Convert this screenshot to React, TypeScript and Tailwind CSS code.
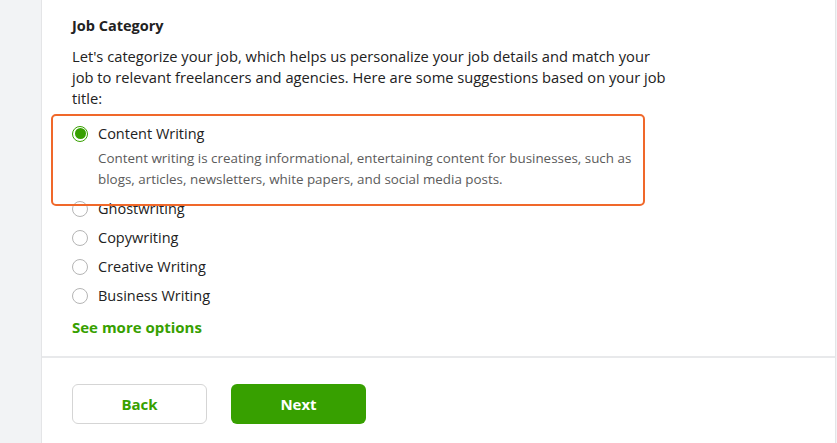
import React from "react";

const options = ["Ghostwriting", "Copywriting", "Creative Writing", "Business Writing"];

function Radio({ checked }: { checked?: boolean }) {
    if (checked) {
        return (
            <span className="flex h-[16px] w-[16px] shrink-0 items-center justify-center rounded-full border border-[#37a000] bg-white">
                <span className="h-[11px] w-[11px] rounded-full bg-[#37a000]" />
            </span>
        );
    }
    return <span className="h-[16px] w-[16px] shrink-0 rounded-full border border-[#b5b5b5] bg-white" />;
}

export default function App() {
    return (
        <div
            className="flex h-[443px] w-[837px] overflow-hidden bg-[#f2f3f5] text-[#222]"
            style={{ fontFamily: "'Open Sans', Lato, sans-serif" }}
        >
            <div className="w-[41px] shrink-0" />
            <div className="flex w-[795px] flex-col border-x border-[#e4e5e7] bg-white">
                {/* Job category section */}
                <div className="relative px-[30px] pt-[16px] pb-[18px]">
                    <h2 className="text-[14.5px] leading-[20px] font-bold">Job Category</h2>
                    <p className="mt-[10px] max-w-[600px] text-[14.7px] leading-[21px]">
                        Let's categorize your job, which helps us personalize your job details and match your
                        <br />
                        job to relevant freelancers and agencies. Here are some suggestions based on your job
                        <br />
                        title:
                    </p>

                    <div className="mt-[14px] flex flex-col">
                        <div className="flex items-center gap-[10px]">
                            <Radio checked />
                            <span className="text-[14.5px] leading-[21px]">Content Writing</span>
                        </div>
                        <p className="mt-[4px] pl-[26px] text-[13.4px] leading-[21px] text-[#5b5b5b]">
                            Content writing is creating informational, entertaining content for businesses, such as
                            <br />
                            blogs, articles, newsletters, white papers, and social media posts.
                        </p>
                        <div className="mt-[8px] flex flex-col gap-[8px]">
                            {options.map((o) => (
                                <div key={o} className="flex items-center gap-[10px]">
                                    <Radio />
                                    <span className="text-[14.5px] leading-[21px]">{o}</span>
                                </div>
                            ))}
                        </div>
                    </div>

                    <a className="mt-[11px] block text-[15px] leading-[21px] font-bold text-[#37a000]">
                        See more options
                    </a>

                    {/* highlight annotation */}
                    <div className="pointer-events-none absolute top-[114px] left-[9px] h-[92px] w-[594px] rounded-[5px] border-2 border-[#f0682a]" />
                </div>

                {/* Footer */}
                <div className="flex gap-[24px] border-t-2 border-[#e8e9eb] px-[30px] pt-[26px]">
                    <button className="h-[40px] w-[135px] rounded-[6px] border border-[#d5d5d5] bg-white text-[15px] font-bold text-[#37a000]">
                        Back
                    </button>
                    <button className="h-[40px] w-[135px] rounded-[6px] bg-[#37a000] text-[15px] font-bold text-white">
                        Next
                    </button>
                </div>
            </div>
        </div>
    );
}
